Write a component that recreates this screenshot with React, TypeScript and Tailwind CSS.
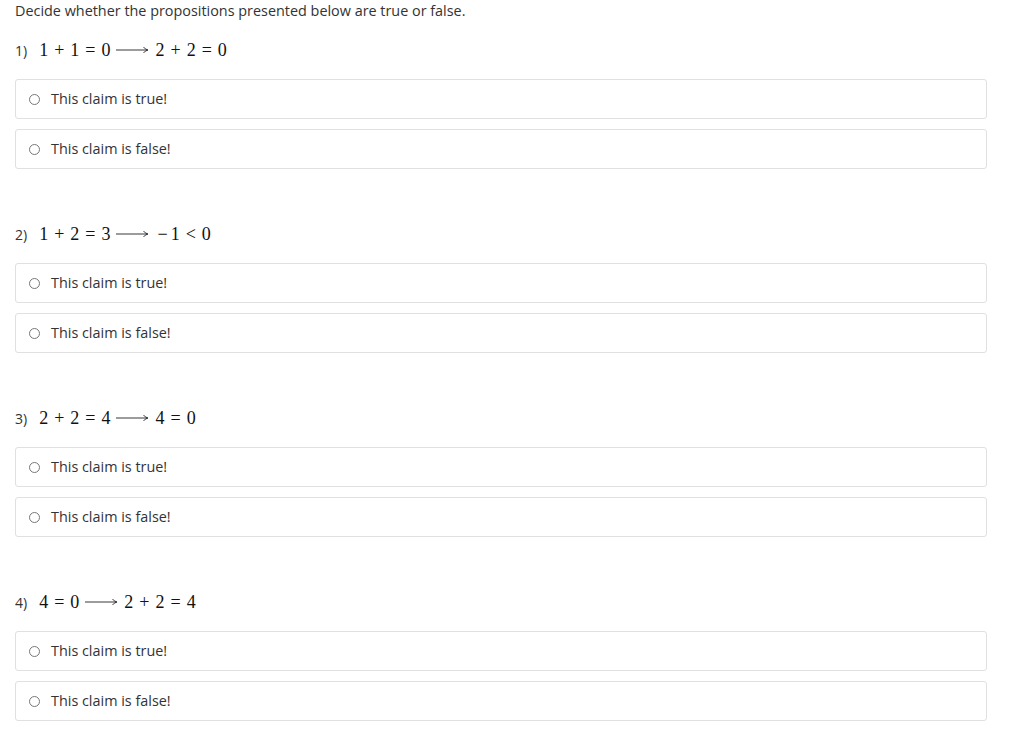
import React from 'react';

type Tok = { t: string; k: 'ord' | 'bin' | 'rel' | 'arrow' | 'neg' };

const questions: Tok[][] = [
  [
    { t: '1', k: 'ord' }, { t: '+', k: 'bin' }, { t: '1', k: 'ord' }, { t: '=', k: 'rel' }, { t: '0', k: 'ord' },
    { t: '', k: 'arrow' },
    { t: '2', k: 'ord' }, { t: '+', k: 'bin' }, { t: '2', k: 'ord' }, { t: '=', k: 'rel' }, { t: '0', k: 'ord' },
  ],
  [
    { t: '1', k: 'ord' }, { t: '+', k: 'bin' }, { t: '2', k: 'ord' }, { t: '=', k: 'rel' }, { t: '3', k: 'ord' },
    { t: '', k: 'arrow' },
    { t: '−', k: 'neg' }, { t: '1', k: 'ord' }, { t: '<', k: 'rel' }, { t: '0', k: 'ord' },
  ],
  [
    { t: '2', k: 'ord' }, { t: '+', k: 'bin' }, { t: '2', k: 'ord' }, { t: '=', k: 'rel' }, { t: '4', k: 'ord' },
    { t: '', k: 'arrow' },
    { t: '4', k: 'ord' }, { t: '=', k: 'rel' }, { t: '0', k: 'ord' },
  ],
  [
    { t: '4', k: 'ord' }, { t: '=', k: 'rel' }, { t: '0', k: 'ord' },
    { t: '', k: 'arrow' },
    { t: '2', k: 'ord' }, { t: '+', k: 'bin' }, { t: '2', k: 'ord' }, { t: '=', k: 'rel' }, { t: '4', k: 'ord' },
  ],
];

// flecha larga estilo \longrightarrow
function Flecha() {
  return (
    <svg width="33" height="10" viewBox="0 0 33 10" className="mx-[6px] inline-block">
      <line x1="0" y1="5" x2="31.5" y2="5" stroke="#222" strokeWidth="0.9" />
      <path d="M27.5 2 Q29 4.3 32 5 Q29 5.7 27.5 8" fill="none" stroke="#222" strokeWidth="0.9" />
    </svg>
  );
}

function Formula({ tokens }: { tokens: Tok[] }) {
  return (
    <span className="inline-flex items-center font-['Liberation_Serif'] text-[18px] text-[#111]">
      {tokens.map((tok, i) => {
        if (tok.k === 'arrow') return <Flecha key={i} />;
        if (tok.k === 'bin') return <span key={i} className="mx-[6px]">{tok.t}</span>;
        if (tok.k === 'rel') return <span key={i} className="mx-[6px]">{tok.t}</span>;
        if (tok.k === 'neg') return <span key={i} className="ml-[2px] mr-[3px]">{tok.t}</span>;
        return <span key={i}>{tok.t}</span>;
      })}
    </span>
  );
}

function Opcion({ texto }: { texto: string }) {
  return (
    <label className="flex h-10 items-center rounded-[3px] border border-[#e0e0e0] bg-white pl-[13px]">
      <span className="h-[11px] w-[11px] rounded-full border border-[#777]" />
      <span className="ml-[11px] text-[14.4px] text-[#333]">{texto}</span>
    </label>
  );
}

export default function App() {
  return (
    <div className="min-h-screen bg-white px-[15px] pt-px font-['Open_Sans'] text-[#333]">
      <p className="text-[14.4px] leading-5">Decide whether the propositions presented below are true or false.</p>

      <div className="mt-[17px] flex flex-col gap-[53px] pr-[13px]">
        {questions.map((q, i) => (
          <div key={i}>
            <div className="flex h-6 items-center">
              <span className="mr-[12px] text-[14px]">{i + 1})</span>
              <Formula tokens={q} />
            </div>
            <div className="mt-[17px] flex flex-col gap-[10px]">
              <Opcion texto="This claim is true!" />
              <Opcion texto="This claim is false!" />
            </div>
          </div>
        ))}
      </div>
    </div>
  );
}
